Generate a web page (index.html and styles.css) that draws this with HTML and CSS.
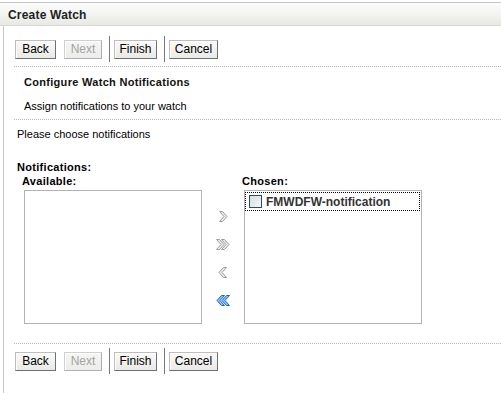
FILE: index.html
```html
<!DOCTYPE html>
<html>
<head>
<meta charset="utf-8">
<link rel="stylesheet" href="styles.css">
</head>
<body>
<div class="header"><span class="title">Create Watch</span></div>
<div class="main">
  <div class="toolbar">
    <button class="btn w-back">Back</button>
    <button class="btn w-next" disabled>Next</button>
    <span class="sep"></span>
    <button class="btn w-finish">Finish</button>
    <span class="sep"></span>
    <button class="btn w-cancel">Cancel</button>
  </div>
  <div class="dots"></div>
  <div class="step-title">Configure Watch Notifications</div>
  <div class="step-desc">Assign notifications to your watch</div>
  <div class="dots"></div>
  <div class="prompt">Please choose notifications</div>
  <div class="label">Notifications:</div>
  <div class="shuttle">
    <div class="col">
      <div class="col-label">Available:</div>
      <div class="listbox"></div>
    </div>
    <div class="arrows">
      <svg class="arr" width="14" height="13" viewBox="0 0 14 13"><polygon points="3.5,1.5 6.5,1.5 11,6.5 6.5,11.5 3.5,11.5 8,6.5" fill="#ececec" stroke="#9c9c9c" stroke-width="1"/></svg>
      <svg class="arr" width="18" height="13" viewBox="0 0 18 13"><polygon points="2.5,1.5 5.5,1.5 10,6.5 5.5,11.5 2.5,11.5 7,6.5" fill="#ececec" stroke="#9c9c9c" stroke-width="1"/><polygon points="7.5,1.5 10.5,1.5 15,6.5 10.5,11.5 7.5,11.5 12,6.5" fill="#ececec" stroke="#9c9c9c" stroke-width="1"/></svg>
      <svg class="arr" width="14" height="13" viewBox="0 0 14 13"><polygon points="10.5,1.5 7.5,1.5 3,6.5 7.5,11.5 10.5,11.5 6,6.5" fill="#ececec" stroke="#9c9c9c" stroke-width="1"/></svg>
      <svg class="arr" width="18" height="13" viewBox="0 0 18 13"><polygon points="15.5,1.5 12.5,1.5 8,6.5 12.5,11.5 15.5,11.5 11,6.5" fill="#8cc4f4" stroke="#1f62c8" stroke-width="1"/><polygon points="10.5,1.5 7.5,1.5 3,6.5 7.5,11.5 10.5,11.5 6,6.5" fill="#8cc4f4" stroke="#1f62c8" stroke-width="1"/></svg>
    </div>
    <div class="col">
      <div class="col-label">Chosen:</div>
      <div class="listbox">
        <div class="item"><span class="cb"></span><span class="item-text">FMWDFW-notification</span></div>
      </div>
    </div>
  </div>
  <div class="dots bottom"></div>
  <div class="toolbar toolbar-bottom">
    <button class="btn w-back">Back</button>
    <button class="btn w-next" disabled>Next</button>
    <span class="sep"></span>
    <button class="btn w-finish">Finish</button>
    <span class="sep"></span>
    <button class="btn w-cancel">Cancel</button>
  </div>
</div>
</body>
</html>
```

FILE: styles.css
```css
html, body {
  margin: 0;
  padding: 0;
  background: #ffffff;
  font-family: "Liberation Sans", Arial, sans-serif;
  font-size: 11px;
  color: #000;
}
.header {
  margin-top: 2px;
  height: 22px;
  border-top: 1px solid #c3c7cb;
  border-bottom: 1px solid #d7d7d3;
  background: linear-gradient(to bottom, #fdfdfc 0%, #f3f3f1 50%, #e8e8e4 100%);
  display: flex;
  align-items: center;
  padding-left: 8px;
}
.title {
  font-weight: bold;
  font-size: 12px;
  color: #222;
  padding-top: 2px;
  letter-spacing: 0.2px;
}
.main {
  margin-left: 3px;
  border-left: 1px solid #c6c6c6;
  height: 367px;
  display: flex;
  flex-direction: column;
}
.toolbar {
  display: flex;
  align-items: center;
  padding-left: 11px;
  margin-top: 10px;
  height: 26px;
}
.toolbar-bottom {
  margin-top: 4px;
}
.btn {
  height: 19px;
  box-sizing: border-box;
  margin: 0;
  padding: 0;
  font-family: "Liberation Sans", Arial, sans-serif;
  font-size: 12px;
  color: #000;
  border: 1px solid;
  border-color: #bdbdbd #707070 #707070 #bdbdbd;
  box-shadow: inset 1px 1px 0 #ffffff;
  background: linear-gradient(to bottom, #fafaf9, #e9e9e6);
  border-radius: 0;
}
.btn[disabled] {
  color: #a3a3a3;
  border-color: #d0d0d0 #b0b0b0 #b0b0b0 #d0d0d0;
  background: linear-gradient(to bottom, #f6f6f4, #ececea);
}
.w-back { width: 41px; }
.w-next { width: 38px; margin-left: 8px; }
.w-finish { width: 43px; }
.w-cancel { width: 49px; }
.sep {
  width: 1px;
  height: 26px;
  background: #777;
  margin: 0 4px 0 7px;
}
.dots {
  margin-left: 10px;
  margin-top: 4px;
  height: 0;
  border-top: 1px dotted #b4b4b4;
}
.step-title {
  font-weight: bold;
  padding-left: 20px;
  height: 13px;
  margin-top: 9px;
  line-height: 13px;
  color: #111;
  letter-spacing: 0.3px;
}
.step-desc {
  padding-left: 20px;
  margin-top: 11px;
  line-height: 13px;
  height: 13px;
}
.step-desc + .dots {
  margin-top: 6px;
}
.prompt {
  padding-left: 13px;
  margin-top: 8px;
  line-height: 13px;
}
.label {
  font-weight: bold;
  padding-left: 13px;
  margin-top: 20px;
  line-height: 13px;
  letter-spacing: 0.3px;
}
.shuttle {
  display: flex;
  margin-top: 1px;
}
.col {
  display: flex;
  flex-direction: column;
}
.col:first-child {
  padding-left: 18px;
}
.col-label {
  font-weight: bold;
  line-height: 13px;
  height: 13px;
  letter-spacing: 0.3px;
}
.listbox {
  margin-top: 2px;
  margin-left: 2px;
  width: 176px;
  height: 132px;
  border: 1px solid #b3b3b3;
}
.arrows {
  width: 38px;
  display: flex;
  flex-direction: column;
  align-items: center;
  padding-top: 35px;
  gap: 15px;
  margin-left: 2px;
}
.arr {
  display: block;
}
.item {
  margin: 1px 1px 0 0;
  height: 17px;
  border: 1px dotted #000;
  display: flex;
  align-items: center;
  padding-left: 3px;
}
.cb {
  width: 11px;
  height: 11px;
  border: 1px solid #1d4f7e;
  background: linear-gradient(135deg, #dcdcd6, #f6f6f4);
  margin-right: 4px;
}
.item-text {
  font-weight: bold;
  color: #333;
  font-size: 12px;
}
.dots.bottom {
  margin-top: 19px;
}
```
